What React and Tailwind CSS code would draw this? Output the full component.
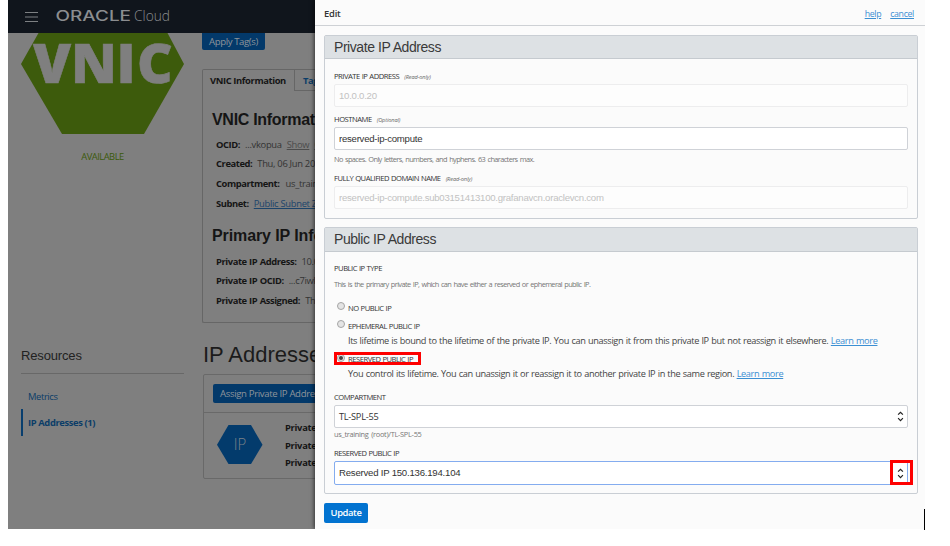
const sans = "font-['Open_Sans','Noto_Sans',sans-serif]";
const arial = "font-['Liberation_Sans',Arial,sans-serif]";

function Row({ label, children }) {
  return (
    <div className="flex h-[19.7px] items-center pl-[13px] text-[9.4px] tracking-[-0.3px]">
      <b className="font-bold tracking-[-0.42px] text-[#151515] [word-spacing:0.4px]">{label}</b>
      {children}
    </div>
  );
}

function Sidebar() {
  return (
    <aside className="flex w-[163px] shrink-0 flex-col">
      <svg className="h-[101px] w-[163px]" viewBox="0 0 163 101">
        <path d="M17.5 0H146.5L163 31L123 101H41L0 31Z" fill="#3d5b0c" />
        <text
          x="12 50 95.5 116"
          y="50"
          fill="#7f7f7f"
          stroke="#7f7f7f"
          strokeWidth="0.6"
          fontSize="55"
          fontWeight="800"
          fontFamily="Open Sans"
        >
          VNIC
        </text>
      </svg>
      <p className="mt-[15px] h-4 text-center text-[9.4px] leading-4 tracking-[-0.5px] text-[#3b5a0b]">AVAILABLE</p>
      <h2 className={`${arial} mt-[182px] h-[27px] border-b border-[#686868] text-[13px] leading-[17px] tracking-[-0.15px] text-[#222]`}>
        Resources
      </h2>
      <nav className="pt-[10px] text-[9.4px] tracking-[-0.38px] text-[#0b3d68]">
        <a className="flex h-[25px] items-center pl-[7px] pt-px">Metrics</a>
        <a className="flex h-[27px] items-center border-l-2 border-[#083e6e] pl-[5px] pt-px font-bold">IP Addresses (1)</a>
      </nav>
    </aside>
  );
}

function Details() {
  return (
    <main className="flex w-[400px] shrink-0 flex-col">
      <button className="h-[17px] w-[63px] rounded-b-[2px] bg-[#03396a] text-[9.6px] leading-4 tracking-[-0.4px] text-[#8e949a]">
        Apply Tag(s)
      </button>
      <div className="mt-[19px] flex h-[22px] text-[9.4px] font-bold leading-[21px] tracking-[-0.38px]">
        <div className="w-[93px] rounded-tl-[2px] border-l border-r border-t border-[#666] pl-[7px] text-[#151515]">
          VNIC Information
        </div>
        <div className="flex-1 border-b border-t border-[#666] pl-2 text-[#0b3d68]">Tags</div>
      </div>
      <section className="h-[232px] rounded-b-[2px] border-b border-l border-[#666] text-[#333]">
        <h2 className={`${arial} mt-[18px] h-[26px] pl-[9px] text-[16px] font-bold leading-[21px] tracking-[-0.3px] text-[#151515]`}>
          VNIC Information
        </h2>
        <Row label="OCID:">
          <span className="ml-[5px]">...vkopua</span>
          <u className="ml-[5px] text-[#4c4c4c]">Show</u>
          <u className="ml-[5px] text-[#4c4c4c]">Copy</u>
        </Row>
        <Row label="Created:"><span className="ml-[5px]">Thu, 06 Jun 2019</span></Row>
        <Row label="Compartment:"><span className="ml-[6px]">us_training</span></Row>
        <Row label="Subnet:"><u className="ml-[5px] text-[#1c446b]">Public Subnet ZkHB</u></Row>
        <h2 className={`${arial} mt-[11px] h-[27px] pl-[9px] text-[16px] font-bold leading-[22px] tracking-[-0.1px] text-[#151515]`}>
          Primary IP Information
        </h2>
        <Row label="Private IP Address:"><span className="ml-[5px]">10.0.0.20</span></Row>
        <Row label="Private IP OCID:"><span className="ml-[5px]">...c7iwka</span></Row>
        <Row label="Private IP Assigned:"><span className="ml-[5px]">Thu, 06 Jun</span></Row>
      </section>
      <h1 className={`${arial} mt-[18px] h-[33px] pl-px text-[22px] leading-[28px] text-[#1b1b1b]`}>IP Addresses</h1>
      <section className="ml-px h-[105px] rounded-l-[2px] border border-[#696969]">
        <div className="h-[38px] border-b border-[#696969] pl-[9px] pt-[9px]">
          <button className="block h-[19px] rounded-[2px] bg-[#03396a] px-[7px] text-[9.6px] leading-[19px] tracking-[-0.35px] text-[#8e949a]">
            Assign Private IP Address
          </button>
        </div>
        <div className="flex pl-[13px] pt-[6px]">
          <svg className="mt-[6px] h-[40px] w-[46px]" viewBox="0 0 46 40">
            <path d="M11.5 0H34L45.5 19.8L34 39H11.5L0 19.8Z" fill="#033b6c" />
            <text x="23" y="25" textAnchor="middle" fill="#7a8289" fontSize="16" fontFamily="Open Sans" fontWeight="300" textLength="12.5" lengthAdjust="spacingAndGlyphs">
              IP
            </text>
          </svg>
          <div className="ml-[22px] text-[9.4px] font-bold leading-[17.5px] tracking-[-0.3px] text-[#151515]">
            <p>Private IP Address:</p>
            <p>Private IP OCID:</p>
            <p>Private IP Assigned:</p>
          </div>
        </div>
      </section>
    </main>
  );
}

function Label({ children, note, className = "" }) {
  return (
    <div className={`flex items-center pt-px text-[7.6px] tracking-[-0.47px] text-[#333] [word-spacing:0.4px] ${className}`}>
      {children}
      {note && <i className="ml-[5px] mt-px text-[5.6px] tracking-[-0.1px] text-[#666]">{note}</i>}
    </div>
  );
}

function Radio({ checked }) {
  return (
    <span className="flex size-[8px] items-center justify-center rounded-full border border-[#a5a5a5] bg-[#e4e4e4]">
      {checked && <span className="size-[4px] rounded-full bg-[#444]" />}
    </span>
  );
}

function Sort() {
  return (
    <svg className="h-[11px] w-[7px]" viewBox="0 0 7 11" fill="none" stroke="#222" strokeWidth="1.2">
      <path d="M1.1 3.7L3.5 1.3L5.9 3.7M1.1 7.2L3.5 9.6L5.9 7.2" />
    </svg>
  );
}

function Panel() {
  return (
    <div className="relative z-10 h-[529px] w-[610px] shrink-0 bg-[#fbfbfb] text-[#444] [clip-path:inset(0_0_0_-8px)] shadow-[-1px_0_4px_rgba(0,0,0,0.6)]">
      <header className="flex h-[26px] items-center border-b border-[#ced1d5] pl-[9px] pr-[11px] pt-[4px] text-[9.4px]">
        <span className="flex-1 font-semibold tracking-[-0.2px] text-[#333]">Edit</span>
        <u className="pt-px text-[8.8px] tracking-[-0.35px] text-[#3b8fd3]">help</u>
        <u className="ml-[9px] pt-px text-[8.8px] tracking-[-0.35px] text-[#3b8fd3]">cancel</u>
      </header>

      <section className="ml-[9px] mt-[9px] h-[184px] w-[594px] rounded-[2px] border border-[#c9ced4]">
        <h3 className={`${arial} h-[23px] border-b border-[#c5cacf] bg-[#dde1e4] pl-[9px] text-[14px] leading-[22px] tracking-[-0.44px] text-[#3a3a3a]`}>
          Private IP Address
        </h3>
        <div className="px-[9px] pt-[9px]">
          <Label note="(Read-only)" className="h-[16px]">PRIVATE IP ADDRESS</Label>
          <div className={`${arial} h-[23px] rounded-[2px] border border-[#ededee] bg-[#fdfdfd] pl-[4px] text-[9.6px] leading-[22px] tracking-[-0.25px] text-[#c2c2c2]`}>
            10.0.0.20
          </div>
          <Label note="(Optional)" className="mt-[4px] h-[16px]">HOSTNAME</Label>
          <div className={`${arial} h-[23px] rounded-[2px] border border-[#cfd2d7] bg-white pl-[4px] text-[9.6px] leading-[22px] tracking-[-0.25px] text-[#333]`}>
            reserved-ip-compute
          </div>
          <p className="mt-[2px] h-[14px] text-[7.4px] leading-[14px] tracking-[-0.62px] text-[#777] [word-spacing:1px]">
            No spaces. Only letters, numbers, and hyphens. 63 characters max.
          </p>
          <Label note="(Read-only)" className="mt-[4px] h-[16px]">FULLY QUALIFIED DOMAIN NAME</Label>
          <div className={`${arial} h-[23px] rounded-[2px] border border-[#ededee] bg-[#fdfdfd] pl-[4px] text-[9.6px] leading-[21px] tracking-[-0.25px] text-[#c2c2c2]`}>
            reserved-ip-compute.sub03151413100.grafanavcn.oraclevcn.com
          </div>
        </div>
      </section>

      <section className="ml-[9px] mt-[8px] h-[267px] w-[594px] rounded-[2px] border border-[#c9ced4]">
        <h3 className={`${arial} h-[24px] border-b border-[#c5cacf] bg-[#dde1e4] pl-[9px] text-[14px] leading-[22px] tracking-[-0.44px] text-[#3a3a3a]`}>
          Public IP Address
        </h3>
        <div className="px-[9px] pt-[8px]">
          <Label className="h-[16px]">PUBLIC IP TYPE</Label>
          <p className="h-[17px] text-[7.4px] leading-[17px] tracking-[-0.63px] text-[#777] [word-spacing:1px]">
            This is the primary private IP, which can have either a reserved or ephemeral public IP.
          </p>
          <div className="mt-[5px] flex h-[18px] gap-[3px] pl-[3px] pt-[4px]">
            <Radio />
            <Label className="h-[12px]">NO PUBLIC IP</Label>
          </div>
          <div className="flex h-[16px] gap-[3px] pl-[3px] pt-[4px]">
            <Radio />
            <Label className="h-[12px]">EPHEMERAL PUBLIC IP</Label>
          </div>
          <p className="h-[19px] pl-[14px] text-[9.2px] leading-[18px] tracking-[-0.36px] [word-spacing:0.45px]">
            Its lifetime is bound to the lifetime of the private IP. You can unassign it from this private IP but not reassign it elsewhere. <u className="text-[#3b8fd3]">Learn more</u>
          </p>
          <div className="relative mt-px flex h-[14px] w-[87px] gap-[3px] pl-[3px] pt-[2px]">
            <Radio checked />
            <Label className="h-[11px]">RESERVED PUBLIC IP</Label>
            <span className="absolute inset-x-0 top-0 h-[13px] border-[3px] border-[#fe0000]" />
          </div>
          <p className="h-[17px] pl-[14px] text-[9.2px] leading-[16px] tracking-[-0.36px] [word-spacing:0.4px]">
            You control its lifetime. You can unassign it or reassign it to another private IP in the same region. <u className="text-[#3b8fd3]">Learn more</u>
          </p>
          <Label className="mt-[6px] h-[16px]">COMPARTMENT</Label>
          <div className="flex h-[23px] items-center justify-between rounded-[2px] border border-[#cfd2d7] bg-white pl-[4px] pr-[3px] text-[9.2px] tracking-[-0.25px] text-[#333]">
            TL-SPL-55
            <Sort />
          </div>
          <p className="h-[12px] text-[7.4px] leading-[12px] tracking-[-0.3px] text-[#777] [word-spacing:1px]">us_training (root)/TL-SPL-55</p>
          <Label className="mt-[6px] h-[15px]">RESERVED PUBLIC IP</Label>
          <div className={`${arial} relative flex h-[24px] items-center justify-between rounded-[2px] border border-[#84acef] bg-white pl-[4px] pr-[3px] text-[9.6px] tracking-[-0.22px] text-[#333]`}>
            Reserved IP 150.136.194.104
            <Sort />
            <span className="absolute -right-[6px] -top-[2px] h-[25px] w-[23px] border-[3px] border-[#fe0000]" />
          </div>
        </div>
      </section>

      <button className="ml-[9px] mt-[9px] block h-[20px] w-[44px] rounded-[2px] bg-[#0273d0] text-center text-[9.4px] font-semibold leading-[20px] tracking-[-0.4px] text-white">
        Update
      </button>
    </div>
  );
}

export default function App() {
  return (
    <div className={`${sans} flex h-[546px] w-[950px] overflow-hidden whitespace-nowrap bg-white pl-2`}>
      <div className="flex h-[529px] w-[307px] shrink-0 flex-col overflow-hidden bg-[#7f7f7f]">
        <header className="flex h-[33px] shrink-0 items-center bg-[#10151c] pl-[17px]">
          <svg className="h-[10px] w-[13px]" viewBox="0 0 13 10" stroke="#7d8083" strokeWidth="1">
            <path d="M0 .5H13M0 5H13M0 9.5H13" />
          </svg>
          <svg className="ml-[18px] h-[20px] w-[116px]" viewBox="0 0 116 20" fill="#8b8d90">
            <text x="-0.5" y="14" fontFamily="Inter" fontWeight="500" fontSize="14" textLength="75.5" lengthAdjust="spacingAndGlyphs">ORACLE</text>
            <text x="78" y="14" fontFamily="Open Sans" fontWeight="300" fontSize="15" textLength="36" lengthAdjust="spacingAndGlyphs">Cloud</text>
          </svg>
        </header>
        <div className="flex gap-[18px] pl-[13px]">
          <Sidebar />
          <Details />
        </div>
      </div>
      <Panel />
      <div className="relative z-20 -ml-px mt-[509px] h-[21px] w-px bg-black" />
    </div>
  );
}
